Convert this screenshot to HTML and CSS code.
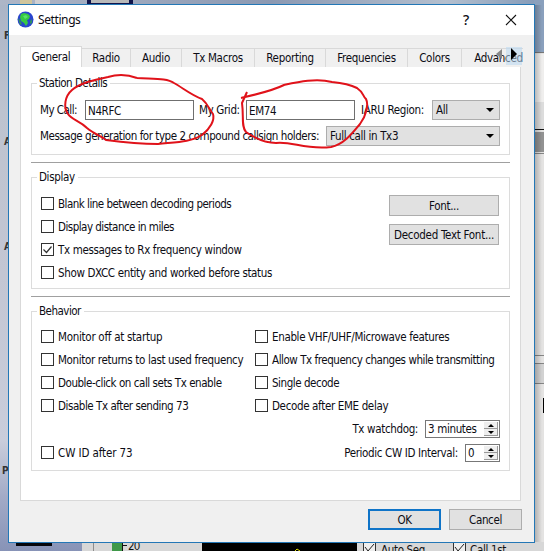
FILE: index.html
```html
<!DOCTYPE html>
<html lang="en">
<head>
<meta charset="utf-8">
<title>Settings</title>
<link rel="stylesheet" href="styles.css">
</head>
<body>
<svg class="desktop" width="544" height="551" viewBox="0 0 544 551" aria-hidden="true">
  <defs>
    <linearGradient id="left" x1="0" y1="0" x2="0" y2="1">
      <stop offset="0" stop-color="#aab4c6"/><stop offset=".2" stop-color="#bdc3cf"/>
      <stop offset=".5" stop-color="#c3c6d3"/><stop offset=".8" stop-color="#c9cddb"/>
      <stop offset=".9" stop-color="#a3abc7"/><stop offset="1" stop-color="#8793b7"/>
    </linearGradient>
    <linearGradient id="top" x1="0" y1="0" x2="1" y2="0">
      <stop offset="0" stop-color="#aeb6c7"/><stop offset=".5" stop-color="#8c99b2"/>
      <stop offset=".82" stop-color="#b4bfce"/><stop offset="1" stop-color="#8299b7"/>
    </linearGradient>
    <linearGradient id="edge" x1="0" y1="0" x2="1" y2="0">
      <stop offset="0" stop-color="#000" stop-opacity=".25"/><stop offset="1" stop-color="#000" stop-opacity="0"/>
    </linearGradient>
  </defs>
  <rect width="544" height="551" fill="url(#left)"/>
  <rect width="544" height="5" fill="url(#top)"/>
  <rect x="20" width="12" height="4" fill="#d0c59c"/>
  <rect x="35" width="15" height="4" fill="#cfcfd2"/>
  <rect x="87" width="46" height="5" fill="#10144a"/>
  <rect x="91" width="38" height="3" fill="#b9b9b9"/>
  <rect x="534" width="10" height="54" fill="#8aa0bd"/>
  <rect x="534" y="53" width="10" height="498" fill="#e4e3e2"/>
  <rect x="534" y="52" width="10" height="1" fill="#777"/>
  <rect x="534" y="54" width="10" height="48" fill="#efeeed"/>
  <rect x="534" y="102" width="10" height="27" fill="#dcdcdc"/>
  <rect x="534" y="129" width="10" height="1" fill="#111"/>
  <rect x="534" y="132" width="10" height="20" fill="#929292"/>
  <path d="M534 153.500H544M534 355.500H544M534 363.500H544M534 383.500H544" stroke="#858585"/>
  <rect x="534" y="364" width="10" height="19" fill="#d2d2d2"/>
  <rect x="543" y="398" width="1" height="15" fill="#000"/>
  <rect x="534" y="5" width="8" height="538" fill="url(#edge)"/>
  <rect x="82" y="542" width="462" height="9" fill="#d7d7d7"/>
  <rect x="16" y="542" width="36" height="4" fill="#05060c"/>
  <path d="M93.500 542V551" stroke="#8d8d8d"/>
  <rect x="112" y="542" width="10" height="9" fill="#3f9848"/>
  <path d="M122.500 542V551M122 545.500H127" stroke="#111"/>
  <rect x="202" y="542" width="155" height="9" fill="#000"/>
  <path d="M295 551l2-2 3 2" stroke="#d9d900" fill="none"/>
  <g fill="#eee" stroke="#333"><rect x="363.500" y="542.500" width="12" height="12"/><rect x="453.500" y="542.500" width="12" height="12"/></g>
  <path d="M365 547l3 4 6-7M455 547l3 4 6-7" stroke="#222" fill="none"/>
  <g class="behind-text">
    <text x="128" y="550" textLength="12">20</text>
    <text x="381" y="554" textLength="44">Auto Seq</text>
    <text x="470" y="554" textLength="36">Call 1st</text>
  </g>
  <g class="icon-text">
    <text x="4" y="39">F</text><text x="4" y="145">A</text><text x="4" y="250">A</text><text x="2" y="474">P</text>
  </g>
</svg>

<main class="dialog">
  <header class="titlebar">
    <svg class="globe" width="17" height="17" viewBox="0 0 17 17">
      <circle cx="8.500" cy="8.500" r="8" fill="#2945cf"/>
      <path d="M4 3l3-1 4 1 2 2-1 3-2 1 1 3-2 3-2-3-3-2-1-4z" fill="#37c943"/>
      <path d="M1 7l2 2 2 4-2 1zM13 10l2-2v4l-2 1z" fill="#2f8f62"/>
      <path d="M6 5l3-1 2 2-3 2z" fill="#58e36b"/>
    </svg>
    <h1 class="title">Settings</h1>
    <span class="help">?</span>
    <svg class="close" width="12" height="12" viewBox="0 0 12 12"><path d="M1 1l10 10M11 1L1 11" stroke="#111" fill="none" stroke-width="1.100"/></svg>
  </header>

  <nav class="tabs">
    <span class="tab active">General</span>
    <span class="tab radio">Radio</span>
    <span class="tab audio">Audio</span>
    <span class="tab macros">Tx Macros</span>
    <span class="tab reporting">Reporting</span>
    <span class="tab frequencies">Frequencies</span>
    <span class="tab colors">Colors</span>
    <span class="tab advanced">Advanced</span>
    <svg class="scroller" width="28" height="18" viewBox="0 0 28 18">
      <rect x="12" width="16" height="18" fill="#b9d9f2" opacity=".55"/>
      <path d="M8 2v10L2 7z" fill="#888"/><path d="M17 1v12l6-6z" fill="#000"/>
    </svg>
  </nav>

  <section class="pane">
    <div class="group station">
      <h2 class="legend tight">Station Details</h2>
      <div class="row">
        <label class="l-call tight">My Call:</label><span class="input">N4RFC</span>
        <label class="l-grid">My Grid:</label><span class="input">EM74</span>
        <label class="l-region">IARU Region:</label><span class="select region">All<i class="arrow"></i></span>
      </div>
      <div class="row">
        <label class="snug">Message generation for type 2 compound callsign holders:</label>
        <span class="select message">Full call in Tx3<i class="arrow"></i></span>
      </div>
    </div>
    <hr>
    <div class="group display">
      <h2 class="legend">Display</h2>
      <div class="checks">
        <label class="check tight"><i class="box"></i>Blank line between decoding periods</label>
        <label class="check tight"><i class="box"></i>Display distance in miles</label>
        <label class="check"><i class="box"><svg width="11" height="11" viewBox="0 0 11 11"><path d="M1.500 5.500l3 3 5-6" fill="none" stroke="#333" stroke-width="1.200"/></svg></i>Tx messages to Rx frequency window</label>
        <label class="check"><i class="box"></i>Show DXCC entity and worked before status</label>
      </div>
      <div class="fonts">
        <span class="button">Font...</span>
        <span class="button loose">Decoded Text Font...</span>
      </div>
    </div>
    <hr>
    <div class="group behavior">
      <h2 class="legend tight">Behavior</h2>
      <div class="checks left">
        <label class="check loose"><i class="box"></i>Monitor off at startup</label>
        <label class="check"><i class="box"></i>Monitor returns to last used frequency</label>
        <label class="check snug"><i class="box"></i>Double-click on call sets Tx enable</label>
        <label class="check snug"><i class="box"></i>Disable Tx after sending 73</label>
        <label class="check cw"><i class="box"></i>CW ID after 73</label>
      </div>
      <div class="checks right">
        <label class="check"><i class="box"></i>Enable VHF/UHF/Microwave features</label>
        <label class="check snug"><i class="box"></i>Allow Tx frequency changes while transmitting</label>
        <label class="check snug"><i class="box"></i>Single decode</label>
        <label class="check"><i class="box"></i>Decode after EME delay</label>
        <div class="spin-row"><label>Tx watchdog:</label><span class="spin minutes">3 minutes<i class="steps"><b class="up"></b><b class="down"></b></i></span></div>
        <div class="spin-row"><label>Periodic CW ID Interval:</label><span class="spin interval">0<i class="steps"><b class="up"></b><b class="down"></b></i></span></div>
      </div>
    </div>
  </section>

  <footer class="actions">
    <span class="button ok">OK</span>
    <span class="button">Cancel</span>
  </footer>
</main>

<svg class="marks" width="544" height="551" viewBox="0 0 544 551" aria-hidden="true">
  <path d="M137 78C129 75 118 74 108 77C94 80 80 83 72 90C65 96 63 107 68 114C72 120 80 121 87 128C94 134 101 136 106 140C121 142 139 144 158 144C176 142 191 142 202 135C210 129 215 120 213 114C209 109 208 104 202 99C191 95 183 88 174 83C167 78 155 79 137 78"/>
  <path d="M247 92L242 103C244 117 241 126 246 132C256 139 266 143 276 143C292 141 305 150 331 147C345 144 354 131 360 124C366 116 369 105 366 99C362 95 364 93 357 88C349 84 342 83 332 82C316 78 298 82 284 85C272 91 258 94 241 98"/>
</svg>
</body>
</html>
```
FILE: styles.css
```css
* { box-sizing: border-box; }
body {
  margin: 0;
  width: 544px;
  height: 551px;
  overflow: hidden;
  position: relative;
  font: 11.5px/16px "DejaVu Sans Condensed", "DejaVu Sans", sans-serif;
  font-stretch: condensed;
  letter-spacing: -0.35px;
  color: #0c0c14;
}
h1, h2 { margin: 0; font-weight: 400; }
i, b { font-style: normal; display: block; flex: none; }
label, span { white-space: nowrap; }
.loose { letter-spacing: -0.28px; }
.snug { letter-spacing: -0.45px; }
.tight { letter-spacing: -0.52px; }

.desktop, .marks { position: absolute; left: 0; top: 0; }
.behind-text { font-size: 11.5px; fill: #111; }
.icon-text { font-size: 10px; font-weight: 700; fill: #333; }
.marks { fill: none; stroke: #e0121a; stroke-width: 2; stroke-linejoin: round; pointer-events: none; }

.dialog {
  position: absolute;
  left: 8px;
  top: 4px;
  width: 527px;
  height: 539px;
  border: 1px solid #2377b6;
  background: #f0f0f0;
}
.titlebar {
  height: 30px;
  padding: 0 17px 0 8px;
  display: flex;
  align-items: center;
  background: #fff;
}
.globe { margin-top: -2px; }
.title { margin-left: 4px; font: 12px/16px "Noto Sans", sans-serif; letter-spacing: -0.4px; }
.help { margin-left: auto; font: 500 14px/16px "Noto Sans", sans-serif; }
.close { margin-left: 36px; margin-top: -1px; }

.tabs { position: relative; display: flex; align-items: flex-end; height: 32px; margin-left: 11px; width: 503px; overflow: hidden; letter-spacing: -0.3px; }
.tab {
  flex: none;
  height: 19px;
  border: solid #d9d9d9;
  border-width: 1px 1px 0 0;
  text-align: center;
  line-height: 19px;
}
.tab.active { width: 62px; height: 21px; border-left-width: 1px; background: #fff; line-height: 20px; }
.radio { width: 49px; }
.audio { width: 51px; }
.macros { width: 73px; }
.reporting { width: 71px; }
.frequencies { width: 82px; }
.colors { width: 54px; }
.advanced { width: 74px; }
.scroller { position: absolute; right: 1px; top: 12px; }

.pane {
  width: 501px;
  height: 434px;
  margin-left: 11px;
  padding: 16px 10px 0;
  border: 1px solid #d9d9d9;
  border-top: 0;
  background: #fff;
}
.group { position: relative; border: 1px solid #dcdcdc; width: 479px; }
.legend {
  position: absolute;
  left: 5px;
  top: -9px;
  padding: 0 3px 0 2px;
  background: #fff;
  font-size: 11.5px;
  line-height: 16px;
}
hr { border: 0; height: 1px; margin: 0; background: #a0a0a0; width: 479px; }

.station { height: 72px; padding: 16px 9px 0 8px; margin-bottom: 7px; }
.row { display: flex; align-items: center; height: 20px; margin-bottom: 6px; }
.l-call { width: 45px; }
.l-grid { width: 47px; margin-left: 5px; }
.l-region { margin-left: 6px; }
.input { flex: none; width: 109px; height: 20px; border: 1px solid #6f6f6f; padding-left: 2px; line-height: 20px; background: #fff; }
.select {
  flex: none;
  display: flex;
  align-items: center;
  justify-content: space-between;
  height: 20px;
  margin-left: auto;
  padding: 0 5px 0 3px;
  border: 1px solid #adadad;
  background: #e1e1e1;
}
.region { width: 68px; }
.message { width: 174px; }
.arrow { border: solid transparent; border-width: 4px 4px 0; border-top-color: #000; }

.display { height: 112px; margin: 14px 0 7px; padding: 14px 10px 0 9px; display: flex; justify-content: space-between; }
.check { display: flex; align-items: center; height: 23px; }
.box { width: 13px; height: 13px; margin-right: 4px; border: 1px solid #333; background: #fff; }
.box svg { display: block; }
.fonts { width: 110px; padding-top: 3px; display: grid; gap: 8px; align-content: start; }
.button { height: 21px; border: 1px solid #adadad; background: #e1e1e1; text-align: center; line-height: 20px; }

.behavior { height: 160px; margin-top: 14px; padding: 13px 9px 0; display: flex; }
.left { width: 214px; flex: none; }
.right { width: 245px; flex: none; }
.cw { margin-top: 24px; letter-spacing: -0.1px; }
.spin-row { display: flex; align-items: center; justify-content: flex-end; gap: 7px; height: 24px; }
.spin {
  display: flex;
  align-items: center;
  justify-content: space-between;
  height: 18px;
  padding: 0 1px 0 2px;
  border: 1px solid #777;
  background: #fff;
}
.minutes { width: 75px; }
.interval { width: 35px; }
.steps { width: 14px; height: 14px; display: grid; grid-template-rows: 7px 7px; }
.steps b { display: grid; place-items: center; background: #eee; border: solid #999; border-width: 0 1px 1px 0; }
.steps b::before { content: ""; border: 3px solid transparent; }
.steps .up::before { border-top-width: 0; border-bottom-color: #000; }
.steps .down::before { border-bottom-width: 0; border-top-color: #000; }

.actions { display: flex; gap: 8px; padding: 8px 0 0 359px; }
.actions .button { width: 73px; line-height: 20px; }
.actions .ok { border: 2px solid #0f74c8; line-height: 18px; }
```
